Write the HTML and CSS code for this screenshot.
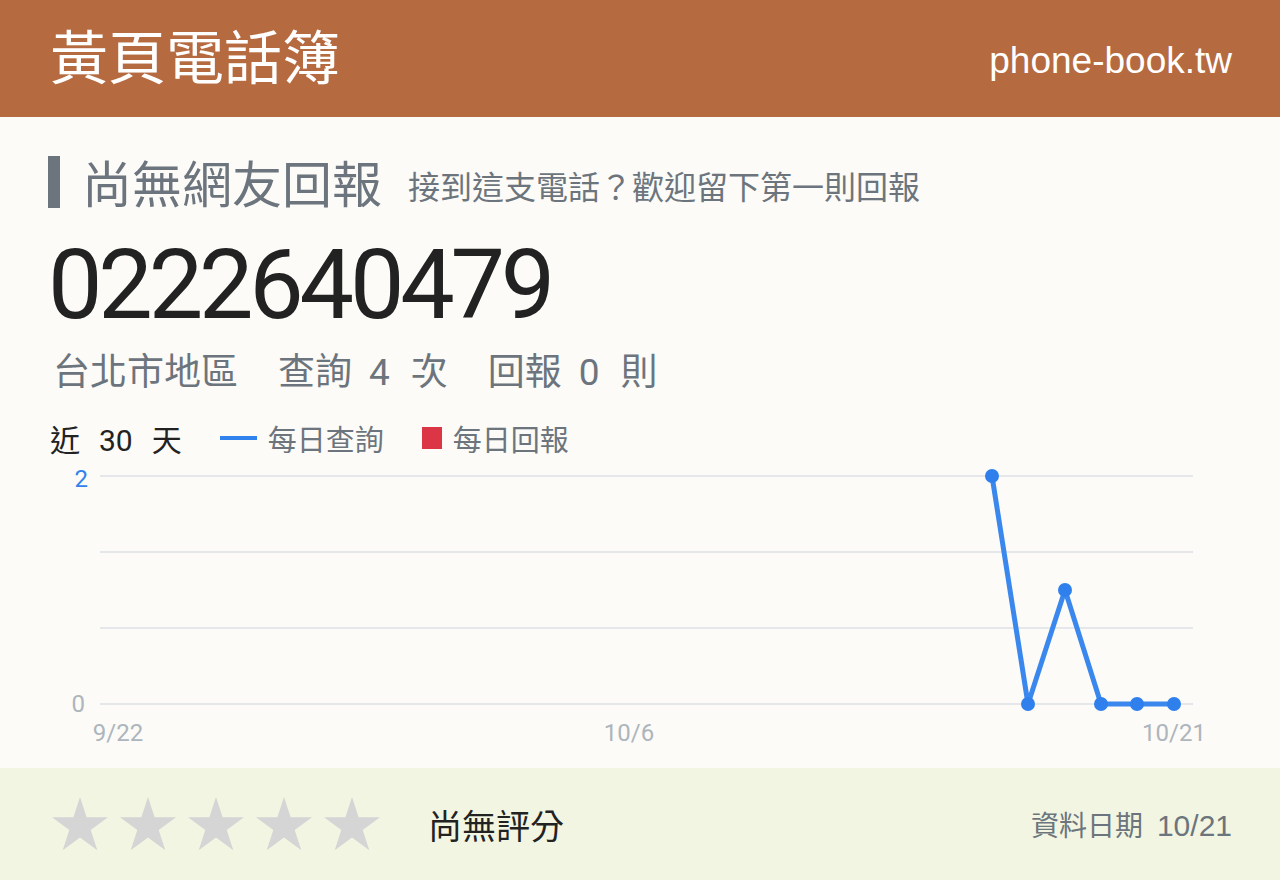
FILE: index.html
```html
<!DOCTYPE html>
<html lang="zh-Hant">
<head>
  <meta charset="UTF-8" />
  <title>0222640479 - 黃頁電話簿</title>
  <link rel="stylesheet" href="styles.css">
</head>
<body>

  <header class="topbar">
    <div class="brand">黃頁電話簿</div>
    <div class="site">phone-book.tw</div>
  </header>

  <main class="page">
    <div class="status">
      <h2 class="status-title">尚無網友回報</h2>
      <span class="status-note">接到這支電話？歡迎留下第一則回報</span>
    </div>

    <h1 class="number">0222640479</h1>

    <p class="summary">
      <span>台北市地區</span>
      <span>查詢<b>4</b>次</span>
      <span>回報<b>0</b>則</span>
    </p>

    <div class="trend-head">
      <span class="trend-title">近<b>30</b>天</span>
      <span class="legend"><i class="mark-line"></i>每日查詢</span>
      <span class="legend"><i class="mark-box"></i>每日回報</span>
    </div>

    <!-- 近 30 天查詢折線圖 -->
    <svg class="chart" width="1184" height="290" viewBox="0 0 1184 290">
      <g class="grid">
        <line x1="52" y1="16" x2="1145" y2="16" />
        <line x1="52" y1="92" x2="1145" y2="92" />
        <line x1="52" y1="168" x2="1145" y2="168" />
        <line x1="52" y1="244" x2="1145" y2="244" />
      </g>
      <text class="tick tick-max" x="40" y="27" text-anchor="end">2</text>
      <text class="tick" x="37" y="252" text-anchor="end">0</text>
      <text class="tick" x="70" y="281" text-anchor="middle">9/22</text>
      <text class="tick" x="581" y="281" text-anchor="middle">10/6</text>
      <text class="tick" x="1126" y="281" text-anchor="middle">10/21</text>
      <polyline class="series" points="944,16 980,244 1017,130 1053,244 1089,244 1126,244" />
      <g class="dots">
        <circle cx="944" cy="16" r="7" />
        <circle cx="980" cy="244" r="7" />
        <circle cx="1017" cy="130" r="7" />
        <circle cx="1053" cy="244" r="7" />
        <circle cx="1089" cy="244" r="7" />
        <circle cx="1126" cy="244" r="7" />
      </g>
    </svg>
  </main>

  <footer class="rating">
    <div class="stars">
      <svg class="star" viewBox="0 0 56 54"><polygon points="28,0 34.6,20.3 56,20.3 38.7,32.9 45.3,53.2 28,40.6 10.7,53.2 17.3,32.9 0,20.3 21.4,20.3" /></svg>
      <svg class="star" viewBox="0 0 56 54"><polygon points="28,0 34.6,20.3 56,20.3 38.7,32.9 45.3,53.2 28,40.6 10.7,53.2 17.3,32.9 0,20.3 21.4,20.3" /></svg>
      <svg class="star" viewBox="0 0 56 54"><polygon points="28,0 34.6,20.3 56,20.3 38.7,32.9 45.3,53.2 28,40.6 10.7,53.2 17.3,32.9 0,20.3 21.4,20.3" /></svg>
      <svg class="star" viewBox="0 0 56 54"><polygon points="28,0 34.6,20.3 56,20.3 38.7,32.9 45.3,53.2 28,40.6 10.7,53.2 17.3,32.9 0,20.3 21.4,20.3" /></svg>
      <svg class="star" viewBox="0 0 56 54"><polygon points="28,0 34.6,20.3 56,20.3 38.7,32.9 45.3,53.2 28,40.6 10.7,53.2 17.3,32.9 0,20.3 21.4,20.3" /></svg>
    </div>
    <div class="rating-text">尚無評分</div>
    <div class="updated">資料日期<span>10/21</span></div>
  </footer>

</body>
</html>
```

FILE: styles.css
```css
body {
  margin: 0;
  font-family: Roboto, "Noto Sans CJK TC", sans-serif;
  background-color: #fcfbf7;
  color: #222;
}

.topbar {
  display: flex;
  align-items: center;
  justify-content: space-between;
  height: 117px;
  padding: 0 48px 0 50px;
  background-color: #b56a40;
  color: white;
}

.brand {
  font-size: 58px;
  line-height: 1;
}

.site {
  font-family: "Liberation Sans", Arial, sans-serif;
  font-size: 37px;
  padding-top: 4px;
}

.page {
  padding: 39px 48px 18px;
}

.status {
  display: flex;
  align-items: center;
}

.status-title {
  margin: 0;
  font-size: 50px;
  font-weight: normal;
  line-height: 44px;
  padding: 8px 0 0 22px;
  border-left: 12px solid #6c757d;
  color: #6c757d;
}

.status-note {
  margin-left: 26px;
  padding-top: 12px;
  font-size: 32px;
  line-height: 1.2;
  color: #6c757d;
}

.number {
  margin: 27px 0 0;
  font-size: 97px;
  font-weight: normal;
  line-height: 100px;
  letter-spacing: -4.2px;
}

.summary {
  display: flex;
  gap: 40px;
  margin: 16px 0 0 5px;
  font-size: 37px;
  line-height: 44px;
  color: #6c757d;
}

.summary b,
.trend-title b {
  font-weight: normal;
}

.summary b {
  margin: 0 21px 0 17px;
}

.trend-head {
  display: flex;
  align-items: center;
  height: 40px;
  margin-top: 23px;
}

.trend-title {
  font-size: 30px;
  margin-left: 2px;
}

.trend-title b {
  margin: 0 19px;
}

.legend {
  display: flex;
  align-items: center;
  font-size: 29px;
  color: #6c757d;
}

.legend + .legend {
  margin-left: 38px;
}

.trend-title + .legend {
  margin-left: 38px;
}

.mark-line {
  width: 37px;
  height: 4px;
  margin-right: 11px;
  background-color: #3083ec;
}

.mark-box {
  width: 20px;
  height: 22px;
  margin-right: 11px;
  background-color: #dc3545;
}

.chart {
  display: block;
  margin-top: 2px;
}

.grid line {
  stroke: #e6e7eb;
  stroke-width: 2;
}

.tick {
  font-family: Roboto, sans-serif;
  font-size: 24px;
  fill: #adb5bd;
}

.tick-max {
  fill: #3083ec;
}

.series {
  fill: none;
  stroke: #3a88ee;
  stroke-width: 5;
  stroke-linejoin: round;
}

.dots circle {
  fill: #2f80ed;
}

.rating {
  display: flex;
  align-items: center;
  height: 112px;
  padding: 0 48px 0 52px;
  background-color: #f2f5e2;
}

.stars {
  display: flex;
  gap: 12px;
}

.star {
  width: 56px;
  height: 54px;
  fill: #d5d5d5;
}

.rating-text {
  margin-left: 48px;
  font-size: 34px;
}

.updated {
  margin-left: auto;
  font-family: "Liberation Sans", Arial, "Noto Sans CJK TC", sans-serif;
  font-size: 28px;
  color: #6c757d;
}

.updated span {
  margin-left: 14px;
  font-size: 30px;
}
```
